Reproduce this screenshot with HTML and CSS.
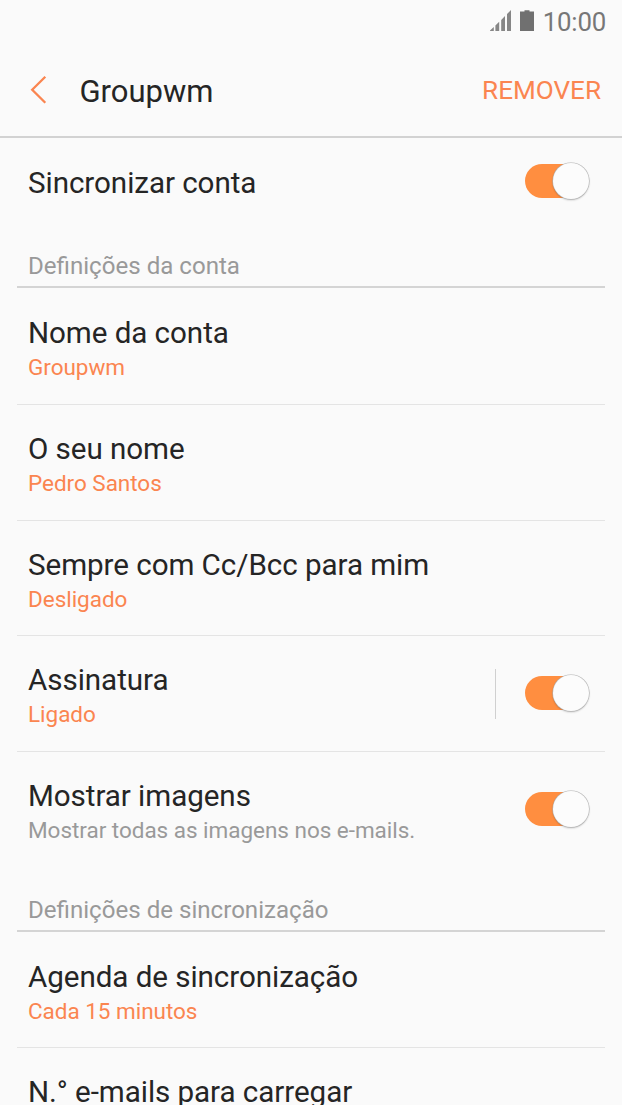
FILE: index.html
```html
<!DOCTYPE html>
<html lang="pt">
<head>
<meta charset="utf-8">
<title>Groupwm</title>
<link rel="stylesheet" href="styles.css">
</head>
<body>
<div class="screen">
  <div class="status">
    <svg class="signal" width="22" height="22" viewBox="0 0 22 22"><path d="M0 21V20.5L3.8 17.1V21ZM5.4 21V15.4L9.2 11.8V21ZM11.2 21V9.9L15 6.1V21ZM17 21V3.9L21 0V21Z" fill="#868686"/></svg>
    <svg class="battery" width="14" height="22" viewBox="0 0 14 22"><path d="M4.5 .2H9.5V1.5H14V21H0V1.5H4.5Z" fill="#707070"/></svg>
    <span class="clock">10:00</span>
  </div>
  <header class="bar">
    <svg class="back" width="18" height="30" viewBox="0 0 18 30"><path d="M16.3 1.8L3.2 14.8L16.3 27.8" fill="none" stroke="#fa8550" stroke-width="2.3"/></svg>
    <h1 class="heading">Groupwm</h1>
    <button class="remove">REMOVER</button>
  </header>
  <main class="list">
    <div class="sync"><span class="title">Sincronizar conta</span><span class="toggle"></span></div>
    <h2 class="section">Definições da conta</h2>
    <div class="row"><div class="text"><div class="title">Nome da conta</div><div class="value">Groupwm</div></div></div>
    <div class="row"><div class="text"><div class="title">O seu nome</div><div class="value">Pedro Santos</div></div></div>
    <div class="row"><div class="text"><div class="title">Sempre com Cc/Bcc para mim</div><div class="value">Desligado</div></div></div>
    <div class="row"><div class="text"><div class="title">Assinatura</div><div class="value">Ligado</div></div><span class="separator"></span><span class="toggle"></span></div>
    <div class="row last"><div class="text"><div class="title">Mostrar imagens</div><div class="value muted">Mostrar todas as imagens nos e-mails.</div></div><span class="toggle"></span></div>
    <h2 class="section">Definições de sincronização</h2>
    <div class="row"><div class="text"><div class="title">Agenda de sincronização</div><div class="value">Cada 15 minutos</div></div></div>
    <div class="row last"><div class="text"><div class="title">N.° e-mails para carregar</div></div></div>
  </main>
</div>
</body>
</html>
```
FILE: styles.css
```css
* { box-sizing: border-box; }
body { margin: 0; background: #fafafa; }
.screen {
  width: 622px;
  height: 1105px;
  overflow: hidden;
  background: #fafafa;
  color: #252525;
  font-family: Roboto, sans-serif;
}
.status {
  display: flex;
  justify-content: flex-end;
  height: 46px;
  padding: 10px 16px 0 0;
}
.battery { margin: 0 9px 0 8px; }
.clock {
  margin-top: -4px;
  font-size: 25.8px;
  line-height: 32px;
  letter-spacing: -.2px;
  color: #777;
}
.bar {
  display: flex;
  align-items: center;
  height: 92px;
  padding: 0 21px 0 29px;
  border-bottom: 2px solid #d2d2d2;
}
.back { margin-top: -2px; }
.heading {
  flex: 1;
  margin: 1px 0 0 32.5px;
  font-size: 31px;
  font-weight: 400;
  line-height: 36px;
}
.remove {
  margin-top: -2px;
  padding: 0;
  border: 0;
  background: none;
  font: 400 26.1px/32px Roboto, sans-serif;
  color: #fa8550;
}
.list { padding: 0 17px 0 17px; }
.sync {
  display: flex;
  justify-content: space-between;
  height: 87px;
  padding: 27px 15px 0 11px;
}
.sync .toggle { margin-top: -2.5px; }
.title { font-size: 29.6px; line-height: 36px; letter-spacing: -.06px; white-space: nowrap; }
.section {
  height: 63px;
  margin: 0 0 1px;
  padding: 26px 11px 0;
  border-bottom: 2px solid #d4d4d4;
  font-size: 24.1px;
  font-weight: 400;
  line-height: 30px;
  color: #999;
}
.row {
  display: flex;
  height: 115.8px;
  padding: 26px 15px 0 11px;
  border-bottom: 1px solid #e4e4e4;
}
.row.last { height: 116.5px; border-bottom: 0; }
.text { flex: 1; }
.value {
  margin-top: 2px;
  font-size: 22.5px;
  line-height: 28px;
  letter-spacing: -.03px;
  color: #fa8550;
}
.value.muted { color: #999; }
.separator {
  width: 1px;
  height: 50px;
  margin: 7px 29px 0 0;
  background: #d0d0d0;
}
.row .toggle { margin-top: 12.5px; }
/* The track slides under the knob at the right end. */
.toggle {
  display: flex;
  flex: none;
  justify-content: flex-end;
  align-items: center;
  width: 65px;
  height: 37px;
  padding-right: 1px;
}
.toggle::before {
  content: "";
  flex: none;
  width: 57px;
  height: 34px;
  margin-right: -29px;
  border-radius: 17px;
  background: #ff8e40;
}
.toggle::after {
  content: "";
  flex: none;
  width: 36px;
  height: 36px;
  border-radius: 50%;
  background: #fcfcfc;
  box-shadow: 0 0 0 .6px #b4b4b4, 0 1px 2px rgba(0, 0, 0, .3);
}
```
